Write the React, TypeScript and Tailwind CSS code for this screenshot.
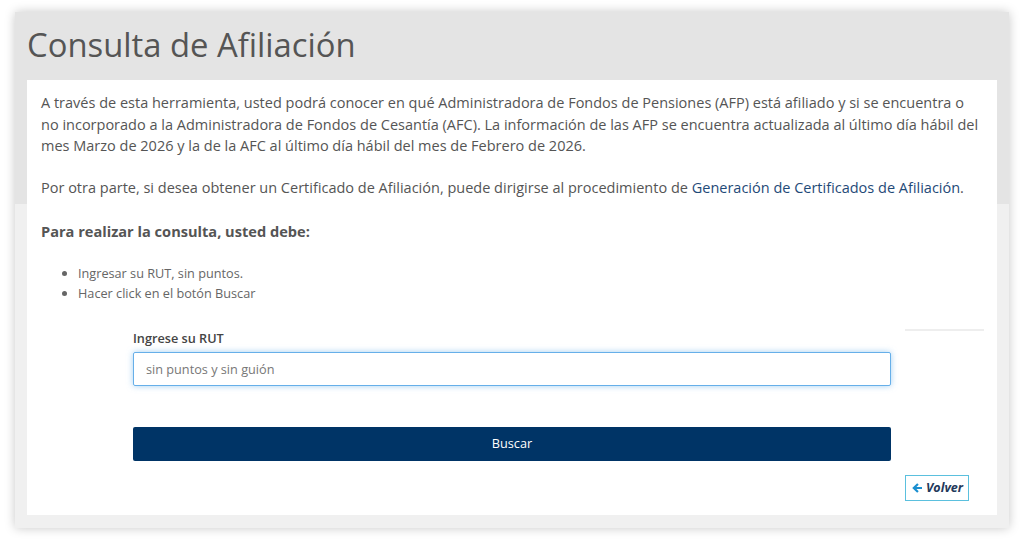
const font = { fontFamily: '"Open Sans", "Liberation Sans", sans-serif' };

// solid left arrow, font-awesome style
function ArrowIcon() {
  return (
    <svg viewBox="0 0 12 12" className="h-[12px] w-[12px] text-[#1a8fd0]" fill="currentColor">
      <path d="M6.2 1.2 L1.2 6 L6.2 10.8 L7.7 9.3 L5.4 7.1 H11 V4.9 H5.4 L7.7 2.7 Z" />
    </svg>
  );
}

export default function App() {
  return (
    <div className="min-h-[544px] bg-white pt-3 px-[15px] pb-4" style={font}>
      <div className="shadow-[0_0_10px_rgba(0,0,0,0.22)]">
        {/* header + intro */}
        <div className="bg-[#e4e4e4] px-3">
          <h1 className="h-[68px] pt-[11px] text-[32.8px] leading-[44px] font-normal text-[#555]">
            Consulta de Afiliación
          </h1>
          <div className="bg-white px-[14px] pt-3 pb-[6px] text-[14.5px] leading-[21.5px] text-[#555]">
            <p>
              A través de esta herramienta, usted podrá conocer en qué Administradora de Fondos de
              Pensiones (AFP) está afiliado y si se encuentra o no incorporado a la Administradora de
              Fondos de Cesantía (AFC). La información de las AFP se encuentra actualizada al último día
              hábil del mes Marzo de 2026 y la de la AFC al último día hábil del mes de Febrero de 2026.
            </p>
            <p className="mt-5">
              Por otra parte, si desea obtener un Certificado de Afiliación, puede dirigirse al
              procedimiento de{" "}
              <a href="#" className="text-[#1f4a78]">
                Generación de Certificados de Afiliación
              </a>
              .
            </p>
          </div>
        </div>

        {/* form */}
        <div className="bg-[#f0f0f0] px-3 pb-[13px]">
          <div className="bg-white px-[14px] pt-4 pb-[14px] text-[#555]">
            <h4 className="text-[14.6px] leading-[22px] font-bold">
              Para realizar la consulta, usted debe:
            </h4>
            <ul className="mt-[21px] list-disc pl-[37px] text-[12.7px] leading-[20px] text-[#666]">
              <li>Ingresar su RUT, sin puntos.</li>
              <li>Hacer click en el botón Buscar</li>
            </ul>

            <div className="mt-[26px] grid grid-cols-[78px_758px_79px] gap-x-[14px]">
              <div />
              <div>
                <label className="block text-[12.7px] leading-[18px] font-semibold text-[#444]">
                  Ingrese su RUT
                </label>
                <input
                  className="mt-[5px] h-[34px] w-full rounded-[2px] border border-[#66afe9] px-3 text-[12.7px] text-[#555] shadow-[0_0_6px_rgba(102,175,233,0.6)] outline-none placeholder:text-[#777]"
                  placeholder="sin puntos y sin guión"
                />
                <button className="mt-[41px] h-[34px] w-full rounded-[2px] bg-[#003466] text-[12.7px] font-medium text-white">
                  Buscar
                </button>
              </div>
              <div className="border-t-2 border-[#eeeeee]" />

              <div />
              <div />
              <button className="mt-[14px] flex h-[26px] w-[64px] items-center justify-center gap-[3px] border border-[#5bc0de] text-[12.5px] font-bold italic text-[#23395a]">
                <ArrowIcon />
                Volver
              </button>
            </div>
          </div>
        </div>
      </div>
    </div>
  );
}
